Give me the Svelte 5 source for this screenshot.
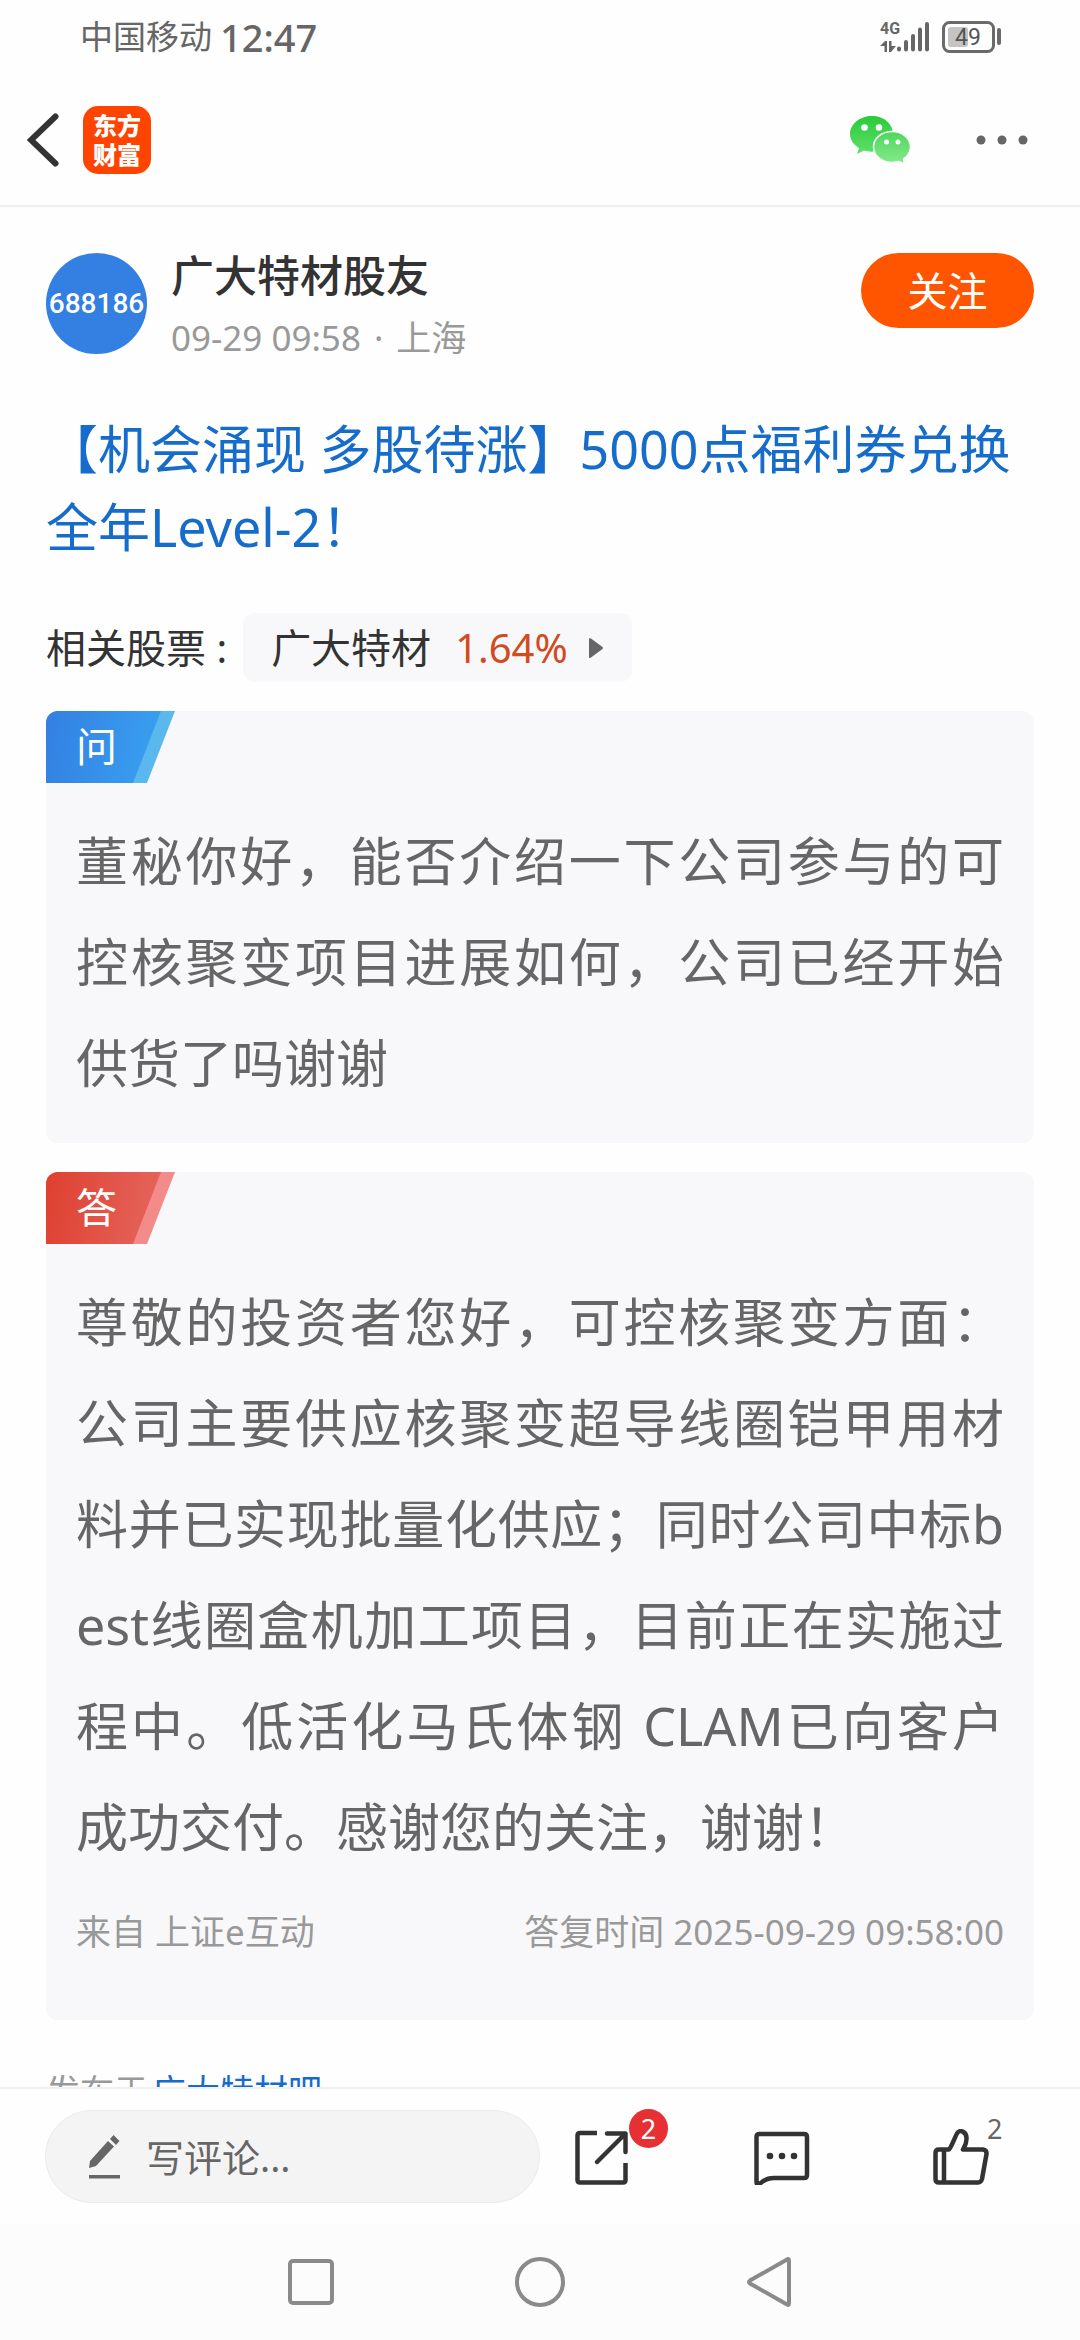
<script>
  let comment = $state('');
  const question = '董秘你好，能否介绍一下公司参与的可控核聚变项目进展如何，公司已经开始供货了吗谢谢';
  const answer =
    '尊敬的投资者您好，可控核聚变方面：公司主要供应核聚变超导线圈铠甲用材料并已实现批量化供应；同时公司中标best线圈盒机加工项目，目前正在实施过程中。低活化马氏体钢 CLAM已向客户成功交付。感谢您的关注，谢谢！';
</script>

<div class="page">
  <div class="status">
    <div class="carrier"><span>中国移动</span><span class="clock">12:47</span></div>
    <div class="indicators">
      <div class="network">
        <span class="net">4G</span>
        <svg class="signal" viewBox="0 0 50 32" aria-hidden="true">
          <path d="M0 25 L5 20 H7 V31 H4.500 V25 Z M9 20 H11.500 V25 H16 L11 31 H9 Z" fill="#666" />
          <g stroke="#666" stroke-width="4" stroke-linecap="round">
            <path d="M19 27.500 V28.500 M26 21 V28.500 M33 15 V28.500 M40 8.500 V28.500 M47 3 V28.500" />
          </g>
        </svg>
      </div>
      <svg class="battery" viewBox="0 0 60 32" aria-label="49%">
        <rect x="1.500" y="1.500" width="50" height="29" rx="6" fill="none" stroke="#6a6a6a" stroke-width="3" />
        <rect x="6" y="6" width="20" height="20" rx="3" fill="#c4c4c4" />
        <rect x="55" y="7" width="4" height="17" rx="2" fill="#6a6a6a" />
        <text x="26" y="24" text-anchor="middle" class="level">49</text>
      </svg>
    </div>
  </div>

  <header class="top">
    <button class="plain back" aria-label="返回">
      <svg viewBox="0 0 32 54"><path d="M28.500 3.500 L4 27 L28.500 50.500" fill="none" stroke="#333" stroke-width="6" stroke-linecap="round" stroke-linejoin="miter" /></svg>
    </button>
    <a class="logo" href="#home"><span>东方</span><span>财富</span></a>
    <button class="plain wechat" aria-label="分享到微信">
      <svg viewBox="0 0 62 50">
        <defs>
          <linearGradient id="wa" x1="0" y1="0" x2="0" y2="1"><stop offset="0" stop-color="#28cb38" /><stop offset="1" stop-color="#61df6c" /></linearGradient>
          <linearGradient id="wb" x1="0" y1="0" x2="0" y2="1"><stop offset="0" stop-color="#4fd75b" /><stop offset="1" stop-color="#86e98c" /></linearGradient>
        </defs>
        <path d="M22 1 C10 1 0 9 0 19 C0 25 4 30 9 33 L7 39 L14 35.500 C17 36.500 20 37 24 36.500 C34 36 43 28 43 19 C43 9 34 1 22 1 Z" fill="url(#wa)" />
        <path d="M42 16.500 C52 16.500 60.500 23 60.500 32 C60.500 37 58 41 53.500 44 L54.500 49 L48.500 46.500 C46 47 44 47.500 42 47.500 C32 47.500 23.500 41 23.500 32 C23.500 23 32 16.500 42 16.500 Z" fill="url(#wb)" stroke="#fff" stroke-width="1.500" />
        <g fill="#fff"><circle cx="14.500" cy="12.500" r="3.300" /><circle cx="29" cy="12.500" r="3.300" /><circle cx="36.500" cy="27" r="2.500" /><circle cx="48" cy="27" r="2.500" /></g>
      </svg>
    </button>
    <button class="plain more" aria-label="更多">
      <svg viewBox="0 0 52 10" fill="#666"><circle cx="5" cy="5" r="4.500" /><circle cx="26" cy="5" r="4.500" /><circle cx="47" cy="5" r="4.500" /></svg>
    </button>
  </header>

  <main>
    <section class="author">
      <div class="avatar">688186</div>
      <div class="who">
        <div class="name">广大特材股友</div>
        <div class="meta"><span>09-29 09:58</span><span>·</span><span>上海</span></div>
      </div>
      <button class="follow">关注</button>
    </section>

    <h1><a href="#promo">【机会涌现 多股待涨】5000点福利券兑换全年Level-2！</a></h1>

    <div class="stocks">
      <span>相关股票 :</span>
      <a class="chip" href="#stock">
        <span>广大特材</span><span class="rise">1.64%</span>
        <svg viewBox="0 0 16 22"><path d="M1 2.500 Q1 0 3 1.500 L14.500 10 Q15.500 11 14.500 12 L3 20.500 Q1 22 1 19.500 Z" fill="#666" /></svg>
      </a>
    </div>

    <article class="card">
      <div class="tag ask"><span>问</span></div>
      <p>{question}</p>
    </article>

    <article class="card">
      <div class="tag reply"><span>答</span></div>
      <p>{answer}</p>
      <footer><span>来自 上证e互动</span><span>答复时间 2025-09-29 09:58:00</span></footer>
    </article>

    <div class="posted">发布于<a href="#bar">广大特材吧</a></div>
  </main>

  <div class="actions">
    <label class="compose">
      <svg viewBox="0 0 32 44" fill="#666">
        <path d="M0 33 L1 26 L19 6 L25 11.500 L7 31 Z" />
        <path d="M21 4 L24.500 0 L30.500 6 L27 10 Z" />
        <rect x="0" y="40" width="31" height="3.500" />
      </svg>
      <input type="text" placeholder="写评论..." aria-label="写评论" bind:value={comment} />
    </label>
    <div class="tools">
      <button class="plain tool" aria-label="分享">
        <svg viewBox="0 0 56 56" fill="none" stroke="#333" stroke-width="4.500">
          <path d="M22 4 H5 Q2.500 4 2.500 6.500 V51 Q2.500 53.500 5 53.500 H48 Q50.500 53.500 50.500 51 V34" />
          <path d="M32 4.500 H50.500 V23" stroke-linecap="round" stroke-linejoin="round" />
          <path d="M22 33 L49 6" stroke-linecap="round" />
        </svg>
        <span class="badge">2</span>
      </button>
      <button class="plain tool" aria-label="评论">
        <svg viewBox="0 0 56 56" fill="none" stroke="#333" stroke-width="4.500" stroke-linejoin="round">
          <path d="M5.500 5 H50 Q53 5 53 8 V46 Q53 49 50 49 H20 Q13 49 8 53 Q2.500 57 2.500 53 V8 Q2.500 5 5.500 5 Z" />
          <g fill="#333" stroke="none"><circle cx="16" cy="27" r="3.300" /><circle cx="28" cy="27" r="3.300" /><circle cx="40" cy="27" r="3.300" /></g>
        </svg>
      </button>
      <button class="plain tool" aria-label="点赞">
        <svg viewBox="0 0 56 56" fill="none" stroke="#333" stroke-width="4.500" stroke-linejoin="round">
          <path d="M16 20.500 C18 19 22 8 24 4.500 C26 0 34 2 33.500 10 C33.500 15 32 17 30 20.500 H50 Q54 21 53.500 25 L49 50 Q48 53.500 45 53.500 H6 Q2.500 53.500 2.500 50 V24 Q2.500 20.500 6 20.500 Z M11 20.500 V53.500" />
        </svg>
        <span class="likes">2</span>
      </button>
    </div>
  </div>

  <nav>
    <button class="plain" aria-label="最近任务"><svg viewBox="0 0 50 50"><rect x="4" y="4" width="42" height="42" rx="3" /></svg></button>
    <button class="plain" aria-label="主屏幕"><svg viewBox="0 0 50 50"><circle cx="25" cy="25" r="23" /></svg></button>
    <button class="plain" aria-label="返回"><svg viewBox="0 0 50 50"><path d="M43 2.500 Q45 1 45 4 V46 Q45 49 43 47.500 L6 26.500 Q4 25 6 23.500 Z" /></svg></button>
  </nav>
</div>

<style>
  :global(body) { margin: 0; background: #fff; }
  .page {
    display: flex; flex-direction: column; height: 100vh; background: #fefefe; color: #333;
    font-family: 'Noto Sans', 'Noto Sans CJK SC', sans-serif; text-spacing-trim: space-all;
  }
  .page * { box-sizing: border-box; }
  svg { display: block; }
  a { color: inherit; text-decoration: none; }
  .plain { border: 0; padding: 0; background: none; font: inherit; color: inherit; }

  .status { flex: none; display: flex; justify-content: space-between; align-items: center; height: 74px; padding: 0 78px 0 80px; color: #666; }
  .carrier { display: flex; align-items: center; gap: 8px; font-size: 33px; line-height: 48px; }
  .clock { font-size: 38px; font-weight: 500; }
  .indicators { display: flex; gap: 12px; }
  .network { position: relative; }
  .signal { width: 50px; height: 32px; }
  .battery { width: 60px; height: 32px; }
  .net { position: absolute; left: 0; top: -2px; font: 700 16px/20px Roboto, sans-serif; }
  .level { font: 400 23px Roboto, sans-serif; fill: #555; }

  .top { flex: none; display: flex; align-items: center; height: 133px; padding: 0 52px 0 27px; border-bottom: 2px solid #f0f0f0; }
  .back svg { width: 32px; height: 54px; }
  .logo {
    display: flex; flex-direction: column; align-items: center; justify-content: center; width: 68px; height: 68px;
    margin-left: 24px; border-radius: 15px; background: #ff4400; color: #fff; font-size: 24px; font-weight: 900; line-height: 29px;
  }
  .wechat { margin-left: auto; }
  .wechat svg { width: 62px; height: 50px; }
  .more { margin-left: 64px; }
  .more svg { width: 52px; height: 10px; }

  main { flex: 1; min-height: 0; overflow: hidden; padding: 46px 46px 0; }
  .author { display: flex; align-items: flex-start; }
  .avatar {
    display: flex; align-items: center; justify-content: center; width: 101px; height: 101px; border-radius: 50%;
    background: #3380e2; color: #fff; font-family: Roboto, sans-serif; font-size: 28px; font-weight: 500;
  }
  .who { flex: 1; display: flex; flex-direction: column; gap: 16px; margin-left: 24px; }
  .name { font-size: 43px; font-weight: 500; line-height: 46px; }
  .meta { display: flex; gap: 13px; font-size: 35px; line-height: 46px; color: #999; }
  .follow { width: 173px; height: 75px; border: 0; border-radius: 38px; background: #ff5500; color: #fff; font: inherit; font-size: 40px; line-height: 48px; }

  h1 { margin: 49px 0 47px; font-size: 52px; font-weight: 400; line-height: 78px; color: #156cca; word-break: break-all; }

  .stocks { display: flex; align-items: center; gap: 16px; font-size: 40px; line-height: 69px; }
  .chip { display: flex; align-items: center; padding: 0 28px; border-radius: 12px; background: #f8f8fa; }
  .rise { margin: 0 20px 0 24px; color: #d14a20; }
  .chip svg { width: 16px; height: 22px; }

  .card { margin-top: 29px; overflow: hidden; border-radius: 12px; background: #f8f8fa; }
  .tag { width: 129px; height: 72px; clip-path: polygon(0 0, 100% 0, 101px 100%, 0 100%); color: #fff; font-size: 41px; line-height: 70px; }
  .tag span { display: block; height: 100%; padding-left: 30px; clip-path: polygon(0 0, 115px 0, 87px 100%, 0 100%); }
  .ask { background: #5ab8ef; }
  .ask span { background: linear-gradient(100deg, #3380e2, #3aa5f2); }
  .reply { background: #f38b8b; }
  .reply span { background: linear-gradient(100deg, #de4030, #e66b63); }
  p { margin: 27px 30px 30px; font-size: 52px; line-height: 101px; color: #666; text-align: justify; word-break: break-all; }
  footer { display: flex; justify-content: space-between; padding: 0 30px 63px; font-size: 35px; line-height: 50px; color: #999; }

  .posted { margin-top: 46px; font-size: 34px; line-height: 50px; color: #999; }
  .posted a { margin-left: 4px; color: #156cca; }

  .actions { flex: none; display: flex; align-items: center; height: 137px; padding-left: 45px; border-top: 2px solid #f0f0f0; background: #fefefe; }
  .compose { flex: 0 0 495px; min-width: 0; display: flex; align-items: center; gap: 25px; height: 93px; padding: 0 43px; border: 1px solid #ebebeb; border-radius: 47px; background: #f4f4f4; }
  .compose svg { flex: none; width: 32px; height: 44px; }
  input { flex: 1; width: 0; min-width: 0; padding: 0; border: 0; outline: 0; background: none; color: #333; font: inherit; font-size: 38px; line-height: 56px; }
  input::placeholder { color: #666; opacity: 1; }
  .tools { flex: 1; display: flex; justify-content: space-between; padding: 0 91px 0 35px; }
  .tool { position: relative; }
  .tool svg { width: 56px; height: 56px; }
  .badge {
    position: absolute; left: 54px; top: -20px; width: 39px; height: 39px; border-radius: 50%;
    background: #e73033; color: #fff; font-size: 27px; line-height: 39px; text-align: center;
  }
  .likes { position: absolute; left: 54px; top: -15px; font-size: 27px; line-height: 30px; color: #666; }

  nav { flex: none; display: flex; justify-content: center; align-items: center; gap: 179px; height: 116px; background: #fcfcfc; }
  nav svg { width: 50px; height: 50px; fill: none; stroke: #8a8a8a; stroke-width: 4; }
</style>
